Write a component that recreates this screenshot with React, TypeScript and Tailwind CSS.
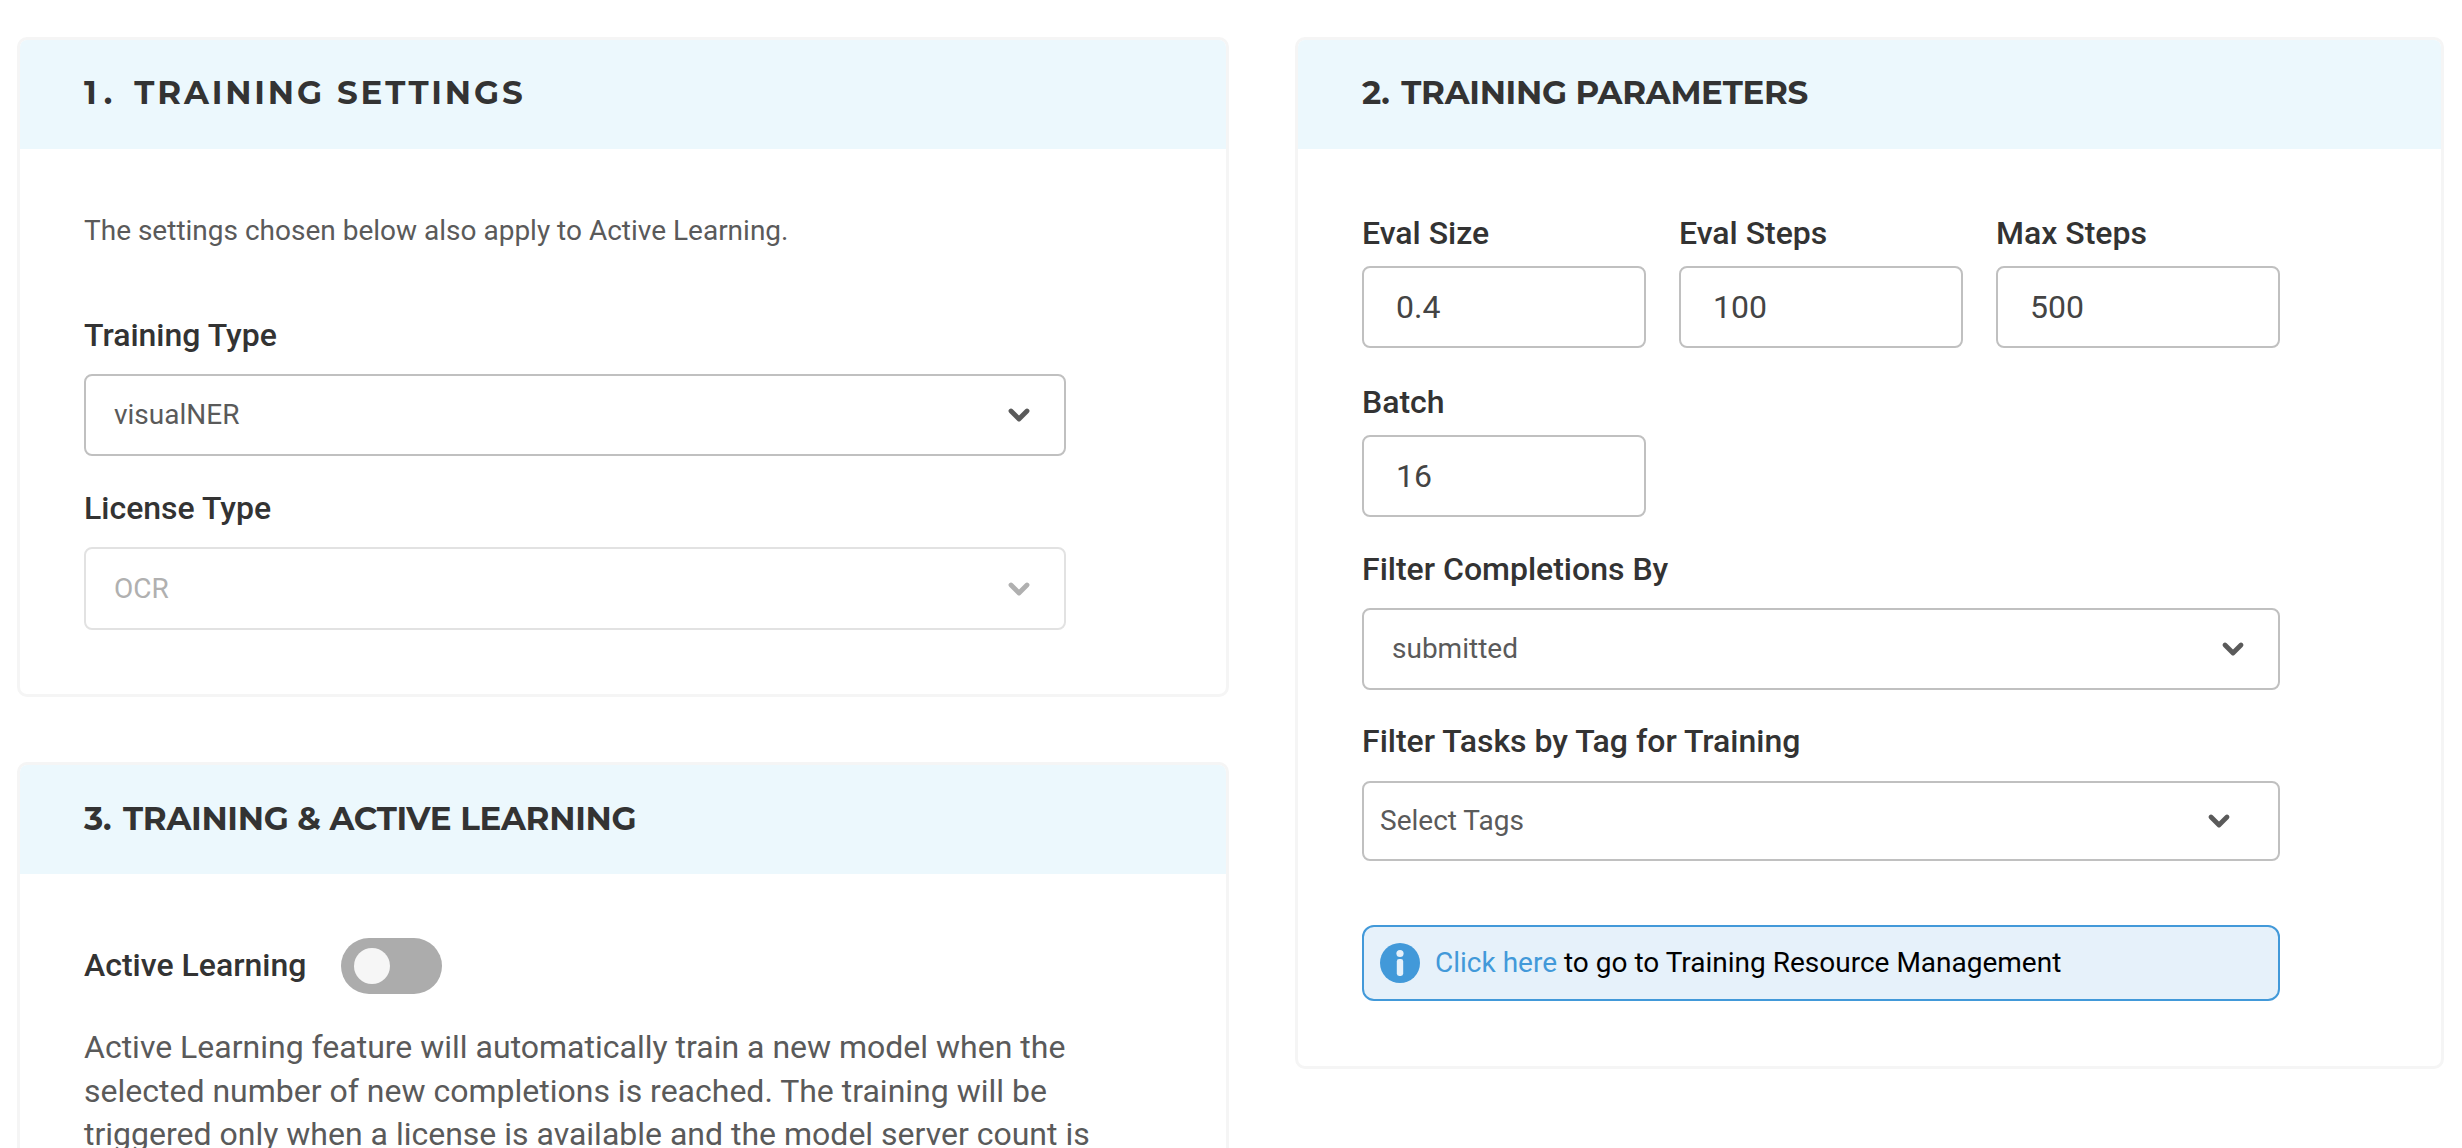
import type { ReactNode } from 'react';
import { ChevronDown } from 'lucide-react';

const inputs = [
  { label: 'Eval Size', value: '0.4' },
  { label: 'Eval Steps', value: '100' },
  { label: 'Max Steps', value: '500' },
];

function CardHeader({ children, wide, lower }: { children: ReactNode; wide?: boolean; lower?: boolean }) {
  return (
    <div className={`flex h-[109px] items-center bg-[#ecf8fd] pl-[64px] ${lower ? 'pb-0' : 'pb-[2px]'}`}>
      <h2
        className={`font-['Montserrat','Inter',sans-serif] text-[32.5px] font-bold text-[#333333] ${wide ? 'tracking-[2.85px]' : 'tracking-[-0.3px]'}`}
      >
        {children}
      </h2>
    </div>
  );
}

function Label({ children }: { children: string }) {
  return <div className="pb-[2px] text-[32px] leading-[38px] font-medium text-[#333333]">{children}</div>;
}

function SelectBox({
  value,
  disabled,
  className,
  pad,
}: {
  value: string;
  disabled?: boolean;
  className: string;
  pad: string;
}) {
  return (
    <div
      className={`flex items-center justify-between rounded-[8px] border-2 bg-white text-[28px] ${pad} ${className} ${
        disabled ? 'border-[#e2e2e2] text-[#b0b0b0]' : 'border-[#c0c0c0] text-[#5a5a5a]'
      }`}
    >
      <span>{value}</span>
      <ChevronDown
        size={32}
        strokeWidth={3.6}
        className={disabled ? 'text-[#b0b0b0]' : 'text-[#5a5a5a]'}
      />
    </div>
  );
}

export default function App() {
  return (
    <div className="h-[1148px] w-[2462px] overflow-hidden bg-white font-['Roboto',sans-serif]">
      <div className="flex items-start gap-[66px] pt-[37px] pl-[17px]">
        <div className="flex w-[1212px] flex-col gap-[65px]">
          <section className="h-[660px] overflow-hidden rounded-[10px] border-[3px] border-[#f5f5f5] bg-white">
            <CardHeader wide>
              <span className="mr-[3px] tracking-[7px]">1.</span> TRAINING SETTINGS
            </CardHeader>
            <div className="pt-[62px] pl-[64px]">
              <p className="text-[28px] leading-[40px] text-[#5a5a5a]">
                The settings chosen below also apply to Active Learning.
              </p>
              <div className="mt-[65px]">
                <Label>Training Type</Label>
              </div>
              <SelectBox
                value="visualNER"
                className="mt-[18px] h-[82px] w-[982px]"
                pad="pl-[28px] pr-[29px]"
              />
              <div className="mt-[33px]">
                <Label>License Type</Label>
              </div>
              <SelectBox
                value="OCR"
                disabled
                className="mt-[18px] h-[83px] w-[982px]"
                pad="pl-[28px] pr-[29px]"
              />
            </div>
          </section>

          <section className="h-[500px] overflow-hidden rounded-[10px] border-[3px] border-[#f5f5f5] bg-white">
            <CardHeader lower>
              <span className="mr-[3px]">3.</span> TRAINING &amp; ACTIVE LEARNING
            </CardHeader>
            <div className="pl-[64px]">
              <div className="mt-[64px] flex items-center gap-[35px]">
                <Label>Active Learning</Label>
                <div className="flex h-[56px] w-[101px] items-center rounded-full bg-[#acacac] pl-[13px]">
                  <div className="h-[36px] w-[36px] rounded-full bg-[#f6f6f6]" />
                </div>
              </div>
              <p className="mt-[32px] w-[1040px] text-[32px] leading-[43.5px] text-[#5a5a5a]">
                Active Learning feature will automatically train a new model when the selected number of new
                completions is reached. The training will be triggered only when a license is available and
                the model server count is
              </p>
            </div>
          </section>
        </div>

        <section className="h-[1032px] w-[1149px] overflow-hidden rounded-[10px] border-[3px] border-[#f5f5f5] bg-white">
          <CardHeader>
            <span className="mr-[3px]">2.</span> TRAINING PARAMETERS
          </CardHeader>
          <div className="pl-[64px]">
            <div className="mt-[65px] grid w-[918px] grid-cols-3 gap-x-[33px] gap-y-[35px]">
              {inputs.map((item) => (
                <div key={item.label}>
                  <Label>{item.label}</Label>
                  <div className="mt-[12px] flex h-[82px] items-center rounded-[8px] border-2 border-[#c0c0c0] pl-[32px] text-[32px] text-[#444444]">
                    {item.value}
                  </div>
                </div>
              ))}
              <div>
                <Label>Batch</Label>
                <div className="mt-[12px] flex h-[82px] items-center rounded-[8px] border-2 border-[#c0c0c0] pl-[32px] text-[32px] text-[#444444]">
                  16
                </div>
              </div>
            </div>
            <div className="mt-[33px]">
              <Label>Filter Completions By</Label>
            </div>
            <SelectBox value="submitted" className="mt-[18px] h-[82px] w-[918px]" pad="pl-[28px] pr-[29px]" />
            <div className="mt-[32px]">
              <Label>Filter Tasks by Tag for Training</Label>
            </div>
            <SelectBox value="Select Tags" className="mt-[19px] h-[80px] w-[918px]" pad="pl-[16px] pr-[43px]" />
            <div className="mt-[64px] flex h-[76px] w-[918px] items-center rounded-[12px] border-[2.5px] border-[#4299d9] bg-[#e6f1fa] pl-[16px] text-[28px]">
              <svg width="40" height="40" viewBox="0 0 40 40" className="mr-[15px]">
                <circle cx="20" cy="20" r="20" fill="#4299d9" />
                <circle cx="20" cy="10.5" r="3.6" fill="#e6f1fa" />
                <rect x="16.8" y="16" width="6.4" height="17" rx="2.4" fill="#e6f1fa" />
              </svg>
              <span className="text-[#4299d9]">Click here</span>
              <span className="ml-[7px] text-black">to go to Training Resource Management</span>
            </div>
          </div>
        </section>
      </div>
    </div>
  );
}
